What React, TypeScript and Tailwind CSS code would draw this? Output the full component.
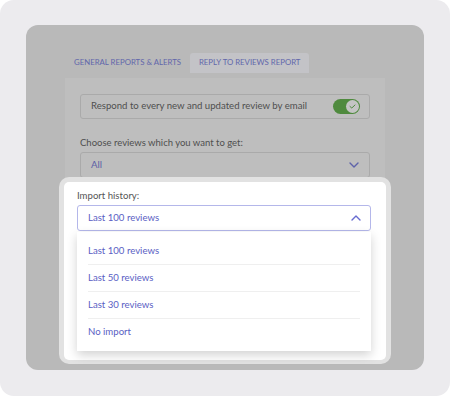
const font = { fontFamily: "Lato, 'Open Sans', sans-serif" };

const historyOptions = ["Last 100 reviews", "Last 50 reviews", "Last 30 reviews", "No import"];

function Chevron({ up, className }: { up?: boolean; className?: string }) {
  return (
    <svg width="10" height="6" viewBox="0 0 10 6" fill="none" className={className}>
      <path
        d={up ? "M1 5L5 1L9 5" : "M1 1L5 5L9 1"}
        stroke="currentColor"
        strokeWidth="1.4"
        strokeLinecap="round"
        strokeLinejoin="round"
      />
    </svg>
  );
}

function Toggle() {
  return (
    <div className="flex h-[15px] w-[27px] items-center justify-end rounded-full bg-[#4f8a3e] pr-[1px]">
      <div className="flex h-[13px] w-[13px] items-center justify-center rounded-full bg-[#c4c4c4]">
        <svg width="7" height="5" viewBox="0 0 7 5" fill="none">
          <path d="M1 2.5L2.8 4L6 1" stroke="#4f8a3e" strokeWidth="1" strokeLinecap="round" strokeLinejoin="round" />
        </svg>
      </div>
    </div>
  );
}

export default function App() {
  return (
    <div className="h-[396px] w-[450px] bg-white" style={font}>
      <div className="h-full w-full rounded-[14px] bg-[#ecebee] pt-[25px] pl-[26px] pr-[26px]">
        <div className="h-[345px] w-[398px] overflow-hidden rounded-[12px] bg-[#b9b9b9] pt-[28px]">
          {/* tabs */}
          <div className="flex px-[39px] text-[7.8px] uppercase text-[#6166ab]">
            <div className="flex h-[20px] items-center px-[9px]">General reports &amp; alerts</div>
            <div className="flex h-[20px] items-center rounded-t-[3px] bg-[#c3c3c7] px-[9px]">
              Reply to reviews report
            </div>
          </div>

          {/* dimmed form */}
          <div className="mx-[39px] mt-[5px] h-[110px] bg-[#bebebe] px-[15px] pt-[16px]">
            <div className="flex h-[25px] items-center justify-between rounded-[3px] border border-[#aaaaaa] pl-[10px] pr-[9px] text-[9.6px] text-[#4f4f4f]">
              <span>Respond to every new and updated review by email</span>
              <Toggle />
            </div>
            <div className="mt-[16px] text-[9.5px] leading-[15px] text-[#4f4f4f]">
              Choose reviews which you want to get:
            </div>
            <div className="mt-[2px] flex h-[26px] items-center justify-between rounded-[3px] border border-[#aaaaaa] pl-[10px] pr-[10px] text-[9.6px] text-[#5b5fa6]">
              <span>All</span>
              <Chevron className="text-[#5e63aa]" />
            </div>
          </div>

          {/* highlighted import history */}
          <div className="relative z-10 mx-[33px] -mt-[11px] rounded-[10px] bg-[#e2e2e2] px-[5px] pt-[5px] pb-[4px]">
            <div className="rounded-[5px] bg-white pl-[13px] pr-[15px] pb-[9px] pt-[7px]">
              <div className="text-[9.6px] leading-[14px] text-[#555]">Import history:</div>
              <div className="mt-[2px] flex h-[26px] items-center justify-between rounded-[3px] border border-[#b4b7ea] pl-[10px] pr-[9px] text-[9.6px] text-[#5a5ec4]">
                <span>Last 100 reviews</span>
                <Chevron up className="text-[#676bd0]" />
              </div>
              <div className="mt-[1px] bg-white px-[11px] pt-[6px] pb-[5px] shadow-[0_4px_10px_rgba(0,0,0,0.18)]">
                {historyOptions.map((opt, i) => (
                  <div
                    key={opt}
                    className={
                      "flex h-[27px] items-center text-[9.6px] text-[#5a5ec4] " +
                      (i < historyOptions.length - 1 ? "border-b border-[#efefef]" : "")
                    }
                  >
                    {opt}
                  </div>
                ))}
              </div>
            </div>
          </div>
        </div>
      </div>
    </div>
  );
}
